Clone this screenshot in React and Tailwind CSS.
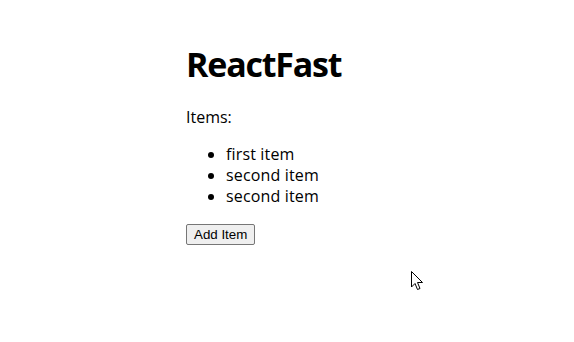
import { useState } from 'react'

export default function App() {
  const [items, setItems] = useState(['first item', 'second item', 'second item'])

  return (
    <div className="relative h-[342px] w-[574px] overflow-hidden bg-white text-black" style={{ fontFamily: '"Open Sans", "Noto Sans", sans-serif' }}>
      <div className="mx-auto w-[202px] pt-[38px]">
        <h1 className="text-[34px] font-bold leading-[52px] tracking-[-1.2px]">ReactFast</h1>
        <p className="mt-[16px] text-[16px] leading-[22px]">Items:</p>
        <ul className="mt-[16px] list-disc pl-[40px] text-[16px] leading-[21px] tracking-[0.15px]">
          {items.map((item, i) => (
            <li key={i}>{item}</li>
          ))}
        </ul>
        <button
          onClick={() => setItems([...items, 'second item'])}
          className="mt-[17px] h-[21px] rounded-[2px] border border-[#767676] bg-[#efefef] px-[7px] text-[13.33px] leading-[19px]"
          style={{ fontFamily: '"Liberation Sans", Arial, sans-serif' }}
        >
          Add Item
        </button>
      </div>
      <svg className="absolute left-[411px] top-[271px]" width="13" height="20" viewBox="0 0 13 20">
        <path d="M0.5 0.5 L0.5 16 L4 12.5 L6.5 18.5 L9 17.5 L6.5 11.5 L11.5 11.5 Z" fill="white" stroke="black" strokeWidth="1" strokeLinejoin="miter" />
      </svg>
    </div>
  )
}
